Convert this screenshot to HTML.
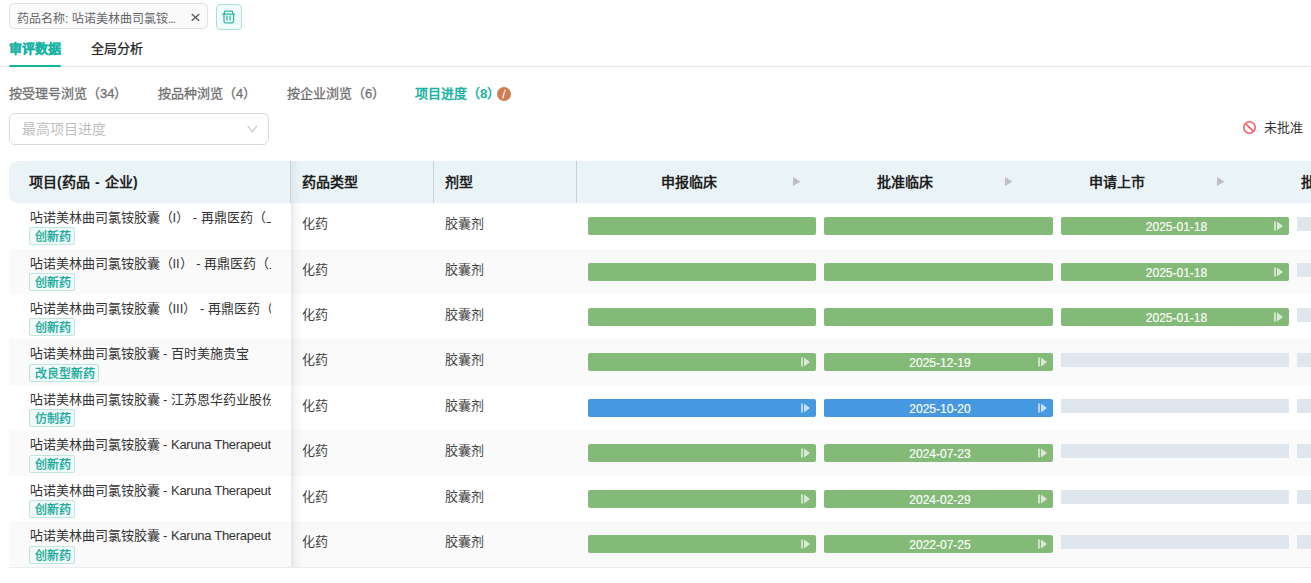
<!DOCTYPE html>
<html lang="zh-CN"><head><meta charset="utf-8">
<style>
*{box-sizing:border-box;margin:0;padding:0}
html,body{width:1311px;height:583px;overflow:hidden;background:#fff}
body{font-family:"Liberation Sans",sans-serif;font-size:13px;color:#333;position:relative}
.a{position:absolute;white-space:nowrap}
.chip{left:9px;top:3px;width:199px;height:26px;border:1px solid #dde1ea;border-radius:5px;background:#fafafb}
.chip .t{position:absolute;left:7px;top:7.5px;font-size:12px;line-height:14px;color:#666}
.chip svg{position:absolute;left:181px;top:9px}
.trash{left:216px;top:4px;width:26px;height:26px;border:1px solid #a9e0d8;border-radius:4px;background:#f1fbf9}

.tab{top:41px;font-size:13px;line-height:16px}
.tab1{left:9px;color:#18b3a4;font-weight:700;-webkit-text-stroke:0.3px #18b3a4}
.tab2{left:91px;color:#222;-webkit-text-stroke:0.25px #222}
.uline{left:9px;top:65px;width:52px;height:2px;background:#13b29f;border-radius:1px}
.bline{left:0;top:66px;width:1311px;height:1px;background:#e6e7ee}
.st{top:86px;font-size:13px;line-height:16px;color:#707070;-webkit-text-stroke:0.3px #707070}
.st.on{color:#1ab3a3;font-weight:700;-webkit-text-stroke:0}
.info{left:497px;top:87px;width:14px;height:14px;border-radius:7px;background:#d07c54;color:#fff;font-size:11px;line-height:14px;text-align:center;font-style:italic;font-family:"Liberation Serif",serif;font-weight:700}
.dd{left:9px;top:113px;width:260px;height:32px;border:1px solid #d9d9d9;border-radius:6px;background:#fff}
.dd .t{position:absolute;left:12px;top:7px;font-size:14px;line-height:16px;color:#bfbfbf}
.dd svg{position:absolute;left:237px;top:11px}
.unap{left:1243px;top:121px}
.unap .t{position:absolute;left:21px;top:-1px;font-size:13px;line-height:16px;color:#333}
.hdr{left:9px;top:161px;width:1320px;height:42px;background:#eaf3f5;border-radius:9px 0 0 9px}
.ht{top:174px;font-size:14px;line-height:16px;font-weight:700;color:#1f1f1f}
.sep{top:161px;width:1px;height:42px;background:#c2d4d7}
.arr{top:177px;width:8px;height:10px}
.row{left:9px;width:1311px;height:45.5px}
.row.g{background:#fafafa}
.name{left:29.5px;width:241.5px;overflow:hidden;font-size:13px;line-height:16px;color:#333}
.tag{left:29px;height:18px;border:1px solid #bde6df;border-radius:2px;background:#f1faf9;color:#14a89a;font-size:12px;line-height:16px;padding:1px 3.5px 0 4.5px;-webkit-text-stroke:0.3px #14a89a}
.c2{left:302px;font-size:13px;line-height:16px;color:#444}
.c3{left:445px;font-size:13px;line-height:16px;color:#444}
.bar{height:18px;border-radius:2px;color:#fff;font-size:12px;line-height:18px;padding-top:1px;padding-left:3px;-webkit-text-stroke:0.15px #fff;text-align:center}
.lat{letter-spacing:-0.3px}
.gr{background:#84ba77}
.bl{background:#4698e0}
.em{height:14px;background:#dfe6ee}
.ic{position:absolute;right:5px;top:4px}
.shadow{left:291px;top:203px;width:12px;height:364px;background:linear-gradient(to right,rgba(0,0,0,0.085),rgba(0,0,0,0.03) 35%,rgba(0,0,0,0))}
.shadow2{left:291px;top:161px;width:10px;height:42px;background:linear-gradient(to right,rgba(0,40,50,0.05),rgba(0,0,0,0))}
.bot{left:9px;top:567px;width:1311px;height:1px;background:#ebebf0}
</style></head><body>

<div class="a chip"><span class="t">药品名称: 呫诺美林曲司氯铵<span style="letter-spacing:-0.9px">...</span></span>
<svg width="10" height="10" viewBox="0 0 10 10"><path d="M0.7 1L8.3 7.8M8.3 1L0.7 7.8" stroke="#5a5a5a" stroke-width="1.4"/></svg></div>
<div class="a trash"><svg style="position:absolute;left:-1px;top:-1px" width="26" height="26" viewBox="0 0 26 26"><path d="M8.3 10V8.2Q8.3 7.15 9.3 7.15H15.6Q16.6 7.15 16.6 8.2V10M6.2 10.1H19M8 10.1V17.2Q8 18.95 9.7 18.95H15.9Q17.55 18.95 17.55 17.2V10.1M10.9 11.5V16.4M14.1 11.5V16.4" fill="none" stroke="#2fb5a8" stroke-width="1.3"/></svg></div>

<div class="a tab tab1">审评数据</div>
<div class="a tab tab2">全局分析</div>
<div class="a bline"></div>
<div class="a uline"></div>

<div class="a st" style="left:9px">按受理号浏览（34）</div>
<div class="a st" style="left:158px">按品种浏览（4）</div>
<div class="a st" style="left:287px">按企业浏览（6）</div>
<div class="a st on" style="left:415px">项目进度（8）</div>
<div class="a info"><svg width="14" height="14" viewBox="0 0 14 14" style="position:absolute;left:0;top:0"><circle cx="7.9" cy="3.7" r="0.85" fill="#fff"/><path d="M7.2 5.6L5.9 10.9" stroke="#fff" stroke-width="1.3" stroke-linecap="round"/></svg></div>

<div class="a dd"><span class="t">最高项目进度</span>
<svg width="12" height="9" viewBox="0 0 12 9"><path d="M0.6 0.8L5.3 6.8L10 0.8" fill="none" stroke="#c4c4c4" stroke-width="1.1"/></svg></div>

<div class="a unap"><svg width="14" height="14" viewBox="0 0 14 14" style="position:absolute;left:0;top:0"><circle cx="6.5" cy="6.5" r="5.7" fill="none" stroke="#fa5c63" stroke-width="1.6"/><path d="M2.6 2.6L10.4 10.4" stroke="#fa5c63" stroke-width="1.6"/></svg><span class="t">未批准</span></div>

<div class="a hdr"></div>
<div class="a ht" style="left:29px;word-spacing:1.5px">项目(药品 - 企业)</div>
<div class="a ht" style="left:302px">药品类型</div>
<div class="a ht" style="left:445px">剂型</div>
<div class="a ht" style="left:661px">申报临床</div>
<div class="a ht" style="left:877px">批准临床</div>
<div class="a ht" style="left:1089px">申请上市</div>
<div class="a ht" style="left:1301px">批准上市</div>
<svg class="a arr" style="left:793px" viewBox="0 0 8 10"><path d="M0 0L7.3 4.6L0 9.2Z" fill="#c0c0c4"/></svg>
<svg class="a arr" style="left:1005px" viewBox="0 0 8 10"><path d="M0 0L7.3 4.6L0 9.2Z" fill="#c0c0c4"/></svg>
<svg class="a arr" style="left:1217px" viewBox="0 0 8 10"><path d="M0 0L7.3 4.6L0 9.2Z" fill="#c0c0c4"/></svg>
<div class="a sep" style="left:290px"></div>
<div class="a sep" style="left:433px"></div>
<div class="a sep" style="left:576px"></div>

<div class="a row" style="top:203px;height:46px"></div>
<div class="a row g" style="top:249px;height:45px"></div>
<div class="a row" style="top:294px;height:45px"></div>
<div class="a row g" style="top:339px;height:46px"></div>
<div class="a row" style="top:385px;height:45px"></div>
<div class="a row g" style="top:430px;height:46px"></div>
<div class="a row" style="top:476px;height:45px"></div>
<div class="a row g" style="top:521px;height:46px"></div>
<div class="a name" style="top:210px">呫诺美林曲司氯铵胶囊（I） - 再鼎医药（上海）有限公司</div>
<div class="a tag" style="top:227px">创新药</div>
<div class="a c2" style="top:215.5px">化药</div>
<div class="a c3" style="top:215.5px">胶囊剂</div>
<div class="a bar gr" style="left:588px;top:217px;width:228px"></div>
<div class="a bar gr" style="left:824px;top:217px;width:229px"></div>
<div class="a bar gr" style="left:1061px;top:217px;width:228px">2025-01-18<svg class="ic" width="10" height="10" viewBox="0 0 10 10"><rect x="0" y="0.5" width="2" height="9" fill="rgba(255,255,255,0.6)"/><path d="M3 0.5L9 5L3 9.5Z" fill="rgba(255,255,255,0.7)"/></svg></div>
<div class="a em" style="left:1297px;top:217px;width:228px"></div>
<div class="a name" style="top:256px">呫诺美林曲司氯铵胶囊（II） - 再鼎医药（上海）有限公司</div>
<div class="a tag" style="top:273px">创新药</div>
<div class="a c2" style="top:261.5px">化药</div>
<div class="a c3" style="top:261.5px">胶囊剂</div>
<div class="a bar gr" style="left:588px;top:263px;width:228px"></div>
<div class="a bar gr" style="left:824px;top:263px;width:229px"></div>
<div class="a bar gr" style="left:1061px;top:263px;width:228px">2025-01-18<svg class="ic" width="10" height="10" viewBox="0 0 10 10"><rect x="0" y="0.5" width="2" height="9" fill="rgba(255,255,255,0.6)"/><path d="M3 0.5L9 5L3 9.5Z" fill="rgba(255,255,255,0.7)"/></svg></div>
<div class="a em" style="left:1297px;top:263px;width:228px"></div>
<div class="a name" style="top:301px">呫诺美林曲司氯铵胶囊（III） - 再鼎医药（上海）有限公司</div>
<div class="a tag" style="top:318px">创新药</div>
<div class="a c2" style="top:306.5px">化药</div>
<div class="a c3" style="top:306.5px">胶囊剂</div>
<div class="a bar gr" style="left:588px;top:308px;width:228px"></div>
<div class="a bar gr" style="left:824px;top:308px;width:229px"></div>
<div class="a bar gr" style="left:1061px;top:308px;width:228px">2025-01-18<svg class="ic" width="10" height="10" viewBox="0 0 10 10"><rect x="0" y="0.5" width="2" height="9" fill="rgba(255,255,255,0.6)"/><path d="M3 0.5L9 5L3 9.5Z" fill="rgba(255,255,255,0.7)"/></svg></div>
<div class="a em" style="left:1297px;top:308px;width:228px"></div>
<div class="a name" style="top:346px">呫诺美林曲司氯铵胶囊 - 百时美施贵宝</div>
<div class="a tag" style="top:364px">改良型新药</div>
<div class="a c2" style="top:351.5px">化药</div>
<div class="a c3" style="top:351.5px">胶囊剂</div>
<div class="a bar gr" style="left:588px;top:353px;width:228px"><svg class="ic" width="10" height="10" viewBox="0 0 10 10"><rect x="0" y="0.5" width="2" height="9" fill="rgba(255,255,255,0.6)"/><path d="M3 0.5L9 5L3 9.5Z" fill="rgba(255,255,255,0.7)"/></svg></div>
<div class="a bar gr" style="left:824px;top:353px;width:229px">2025-12-19<svg class="ic" width="10" height="10" viewBox="0 0 10 10"><rect x="0" y="0.5" width="2" height="9" fill="rgba(255,255,255,0.6)"/><path d="M3 0.5L9 5L3 9.5Z" fill="rgba(255,255,255,0.7)"/></svg></div>
<div class="a em" style="left:1061px;top:353px;width:228px"></div>
<div class="a em" style="left:1297px;top:353px;width:228px"></div>
<div class="a name" style="top:392px">呫诺美林曲司氯铵胶囊 - 江苏恩华药业股份有限公司</div>
<div class="a tag" style="top:409px">仿制药</div>
<div class="a c2" style="top:397.5px">化药</div>
<div class="a c3" style="top:397.5px">胶囊剂</div>
<div class="a bar bl" style="left:588px;top:399px;width:228px"><svg class="ic" width="10" height="10" viewBox="0 0 10 10"><rect x="0" y="0.5" width="2" height="9" fill="rgba(255,255,255,0.6)"/><path d="M3 0.5L9 5L3 9.5Z" fill="rgba(255,255,255,0.7)"/></svg></div>
<div class="a bar bl" style="left:824px;top:399px;width:229px">2025-10-20<svg class="ic" width="10" height="10" viewBox="0 0 10 10"><rect x="0" y="0.5" width="2" height="9" fill="rgba(255,255,255,0.6)"/><path d="M3 0.5L9 5L3 9.5Z" fill="rgba(255,255,255,0.7)"/></svg></div>
<div class="a em" style="left:1061px;top:399px;width:228px"></div>
<div class="a em" style="left:1297px;top:399px;width:228px"></div>
<div class="a name" style="top:437px">呫诺美林曲司氯铵胶囊 - <span class="lat">Karuna Therapeutics</span></div>
<div class="a tag" style="top:455px">创新药</div>
<div class="a c2" style="top:442.5px">化药</div>
<div class="a c3" style="top:442.5px">胶囊剂</div>
<div class="a bar gr" style="left:588px;top:444px;width:228px"><svg class="ic" width="10" height="10" viewBox="0 0 10 10"><rect x="0" y="0.5" width="2" height="9" fill="rgba(255,255,255,0.6)"/><path d="M3 0.5L9 5L3 9.5Z" fill="rgba(255,255,255,0.7)"/></svg></div>
<div class="a bar gr" style="left:824px;top:444px;width:229px">2024-07-23<svg class="ic" width="10" height="10" viewBox="0 0 10 10"><rect x="0" y="0.5" width="2" height="9" fill="rgba(255,255,255,0.6)"/><path d="M3 0.5L9 5L3 9.5Z" fill="rgba(255,255,255,0.7)"/></svg></div>
<div class="a em" style="left:1061px;top:444px;width:228px"></div>
<div class="a em" style="left:1297px;top:444px;width:228px"></div>
<div class="a name" style="top:483px">呫诺美林曲司氯铵胶囊 - <span class="lat">Karuna Therapeutics</span></div>
<div class="a tag" style="top:500px">创新药</div>
<div class="a c2" style="top:488.5px">化药</div>
<div class="a c3" style="top:488.5px">胶囊剂</div>
<div class="a bar gr" style="left:588px;top:490px;width:228px"><svg class="ic" width="10" height="10" viewBox="0 0 10 10"><rect x="0" y="0.5" width="2" height="9" fill="rgba(255,255,255,0.6)"/><path d="M3 0.5L9 5L3 9.5Z" fill="rgba(255,255,255,0.7)"/></svg></div>
<div class="a bar gr" style="left:824px;top:490px;width:229px">2024-02-29<svg class="ic" width="10" height="10" viewBox="0 0 10 10"><rect x="0" y="0.5" width="2" height="9" fill="rgba(255,255,255,0.6)"/><path d="M3 0.5L9 5L3 9.5Z" fill="rgba(255,255,255,0.7)"/></svg></div>
<div class="a em" style="left:1061px;top:490px;width:228px"></div>
<div class="a em" style="left:1297px;top:490px;width:228px"></div>
<div class="a name" style="top:528px">呫诺美林曲司氯铵胶囊 - <span class="lat">Karuna Therapeutics</span></div>
<div class="a tag" style="top:546px">创新药</div>
<div class="a c2" style="top:533.5px">化药</div>
<div class="a c3" style="top:533.5px">胶囊剂</div>
<div class="a bar gr" style="left:588px;top:535px;width:228px"><svg class="ic" width="10" height="10" viewBox="0 0 10 10"><rect x="0" y="0.5" width="2" height="9" fill="rgba(255,255,255,0.6)"/><path d="M3 0.5L9 5L3 9.5Z" fill="rgba(255,255,255,0.7)"/></svg></div>
<div class="a bar gr" style="left:824px;top:535px;width:229px">2022-07-25<svg class="ic" width="10" height="10" viewBox="0 0 10 10"><rect x="0" y="0.5" width="2" height="9" fill="rgba(255,255,255,0.6)"/><path d="M3 0.5L9 5L3 9.5Z" fill="rgba(255,255,255,0.7)"/></svg></div>
<div class="a em" style="left:1061px;top:535px;width:228px"></div>
<div class="a em" style="left:1297px;top:535px;width:228px"></div>
<div class="a bot"></div>
<div class="a shadow"></div><div class="a shadow2"></div>
</body></html>
